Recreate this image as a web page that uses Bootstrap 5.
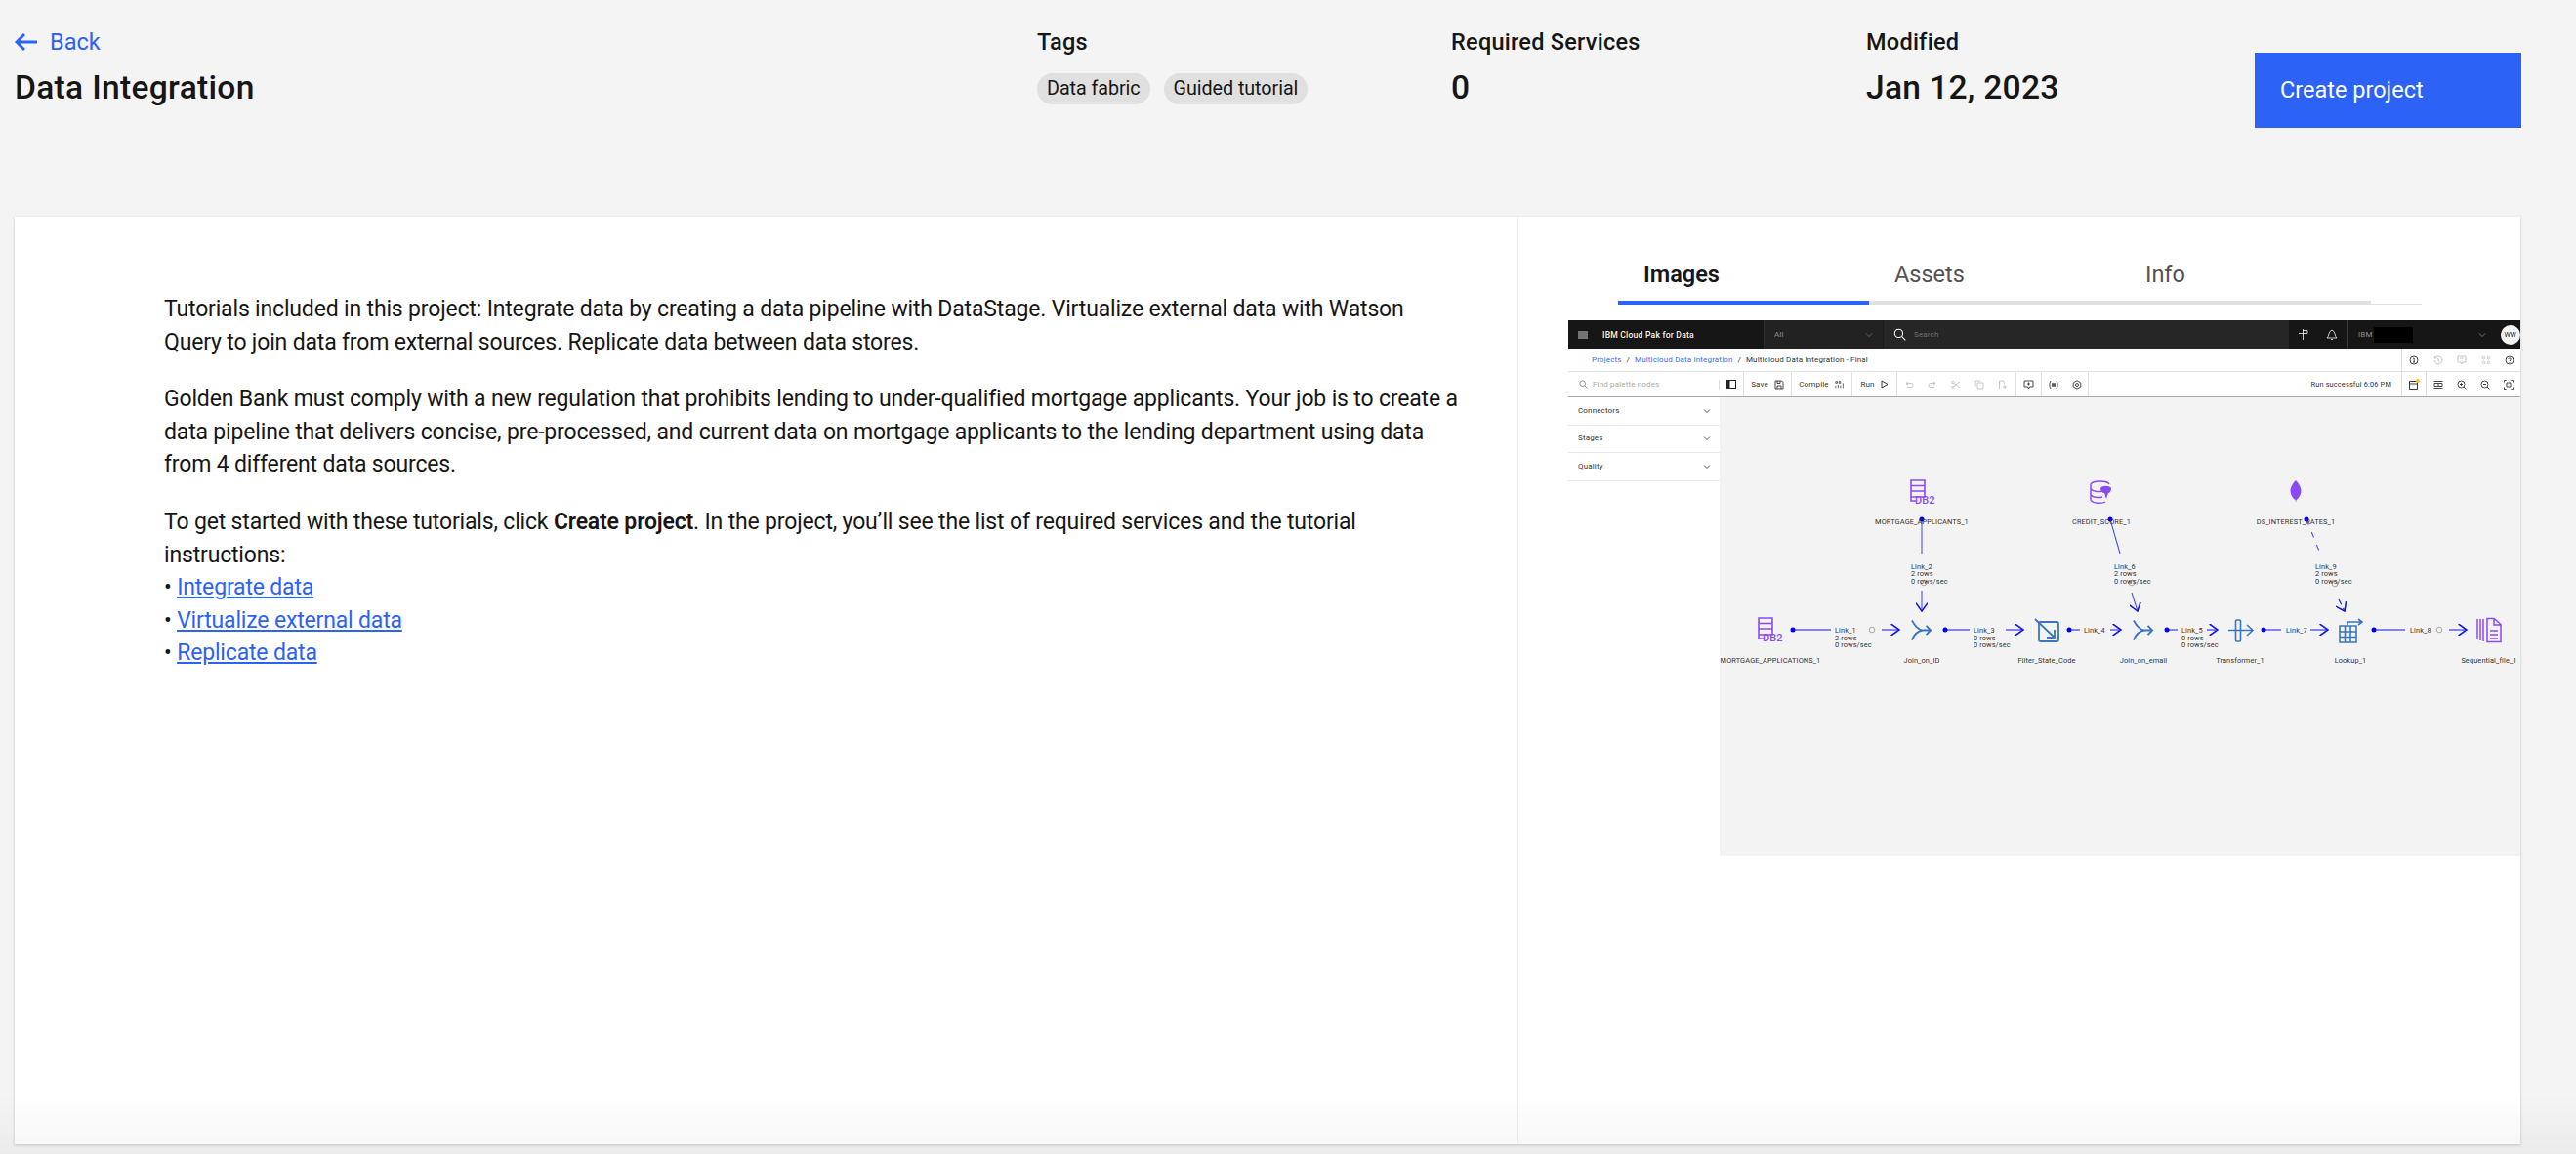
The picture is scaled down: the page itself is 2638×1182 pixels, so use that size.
<!DOCTYPE html>
<html lang="en">
  <head>
    <meta charset="UTF-8" />
    <meta name="viewport" content="width=device-width, initial-scale=1.0" />
    <title>Data Integration</title>
    <link href="https://cdn.jsdelivr.net/npm/bootstrap@5.3.3/dist/css/bootstrap.min.css" rel="stylesheet" />
    <style>
      body { background: #f4f4f4; color: #161616; font-family: Roboto, "Liberation Sans", sans-serif; font-size: 23px; line-height: 33.6px; letter-spacing: -.17px; height: 1182px; overflow: hidden; }
      a { color: #2d62f6; }
      .page-head { height: 222px; padding: 26px 56px 0 15px; }
      .head-title { width: 1047px; }
      .head-tags { width: 424px; }
      .head-req { width: 425px; }
      .head-mod { width: 398px; }
      .back-link { text-decoration: none; line-height: 34px; font-size: 23.5px; letter-spacing: 0; }
      .back-link svg { margin-right: 12px; }
      .head-label { font-size: 23.5px; font-weight: 500; line-height: 34px; letter-spacing: .25px; }
      .head-value { font-size: 33.6px; line-height: 44px; font-weight: 500; margin: 8px 0 0; letter-spacing: .3px; }
      .tag-chip { background: #e0e0e0; font-size: 19.7px; line-height: 32px; height: 32px; padding: 0 10px; letter-spacing: -.04px; }
      .head-chips { margin-top: 15px; gap: 14px; }
      .create-btn { width: 273px; height: 77px; margin-top: 28px; background: #2d62f6; border: 0; color: #fff; font-size: 23.5px; padding: 0 26px; text-align: left; letter-spacing: 0; }
      .main-card { width: 2566px; height: 950px; margin-left: 15px; box-shadow: 0 1px 3px rgba(0,0,0,.18); }
      .desc-pane { width: 1540px; padding: 78px 56px 0 153px; border-right: 1px solid #f0f0f0; }
      .desc-pane p { margin-bottom: 25px; }
      .desc-pane strong { font-weight: 600; }
      .gallery-pane { padding: 0 0 0 51px; width: 1026px; }
      .tab-strip { margin: 40px 0 0 51px; width: 823px; height: 50px; border-bottom: 1px solid #e0e0e0; }
      .tab-item { width: 257px; height: 50px; padding: 3px 26px 0; border-bottom: 4px solid #e0e0e0; color: #525252; text-decoration: none; font-size: 23.5px; letter-spacing: 0; }
      .tab-item.on { color: #161616; font-weight: 600; border-bottom-color: #2d62f6; }
      .shot { width: 975px; height: 549px; margin-top: 16px; background: #fff; font-size: 8px; line-height: 10px; letter-spacing: .15px; color: #333; overflow: hidden; }
      .shot svg { display: block; flex: none; }
      .shot-top { height: 29px; background: #262626; color: #c6c6c6; border-top-left-radius: 5px; border-top-right-radius: 5px; }
      .top-brand { width: 200px; background: #161616; color: #f4f4f4; font-size: 8.6px; font-weight: 500; padding-left: 10px; gap: 15px; letter-spacing: .2px; }
      .top-scope { width: 122px; padding: 0 10px; background: #222; border-left: 1px solid #2c2c2c; color: #8d8d8d; }
      .top-search { padding-left: 10px; gap: 8px; color: #6f6f6f; border-left: 1px solid #1c1c1c; }
      .top-tools { width: 60px; background: #161616; gap: 18px; padding-left: 9px; }
      .top-acct { width: 177px; background: #161616; border-left: 1px solid #393939; padding-left: 10px; color: #8d8d8d; }
      .acct-mask { width: 40px; height: 16px; background: #000; margin-left: 1px; }
      .acct-chev { margin-left: 67px; margin-right: 9px; }
      .acct-face { width: 20px; height: 20px; background: #f4f4f4; color: #161616; font-size: 7px; margin-left: 6px; letter-spacing: 0; }
      .shot-crumb { height: 24px; border-bottom: 1px solid #e0e0e0; padding-left: 24px; }
      .shot-crumb a { color: #3b6cf2; text-decoration: none; }
      .crumb-gap { margin: 0 5px; }
      .crumb-icons { width: 122px; height: 23px; border-left: 1px solid #e0e0e0; gap: 14.5px; padding-left: 7px; }
      .shot-bar { height: 26px; border-bottom: 1px solid #a8a8a8; }
      .bar-find { width: 155px; padding-left: 11px; gap: 5px; color: #a8a8a8; border-right: 1px solid #e0e0e0; }
      .bar-cell { height: 25px; border-right: 1px solid #e0e0e0; gap: 6px; }
      .bar-plain { gap: 14px; padding: 0 0 0 7px; width: 122px; color: #a8a8a8; }
      .bar-status { font-size: 7.4px; padding-right: 10px; }
      .bar-end { height: 25px; border-left: 1px solid #e0e0e0; }
      .icon-dim { color: #c0c0c0; }
      .shot-body { height: 470px; }
      .palette { width: 155px; }
      .palette-row { height: 28.6px; padding: 0 9px 0 10px; border-bottom: 1px solid #e8e8e8; }
      .flow { width: 820px; height: 470px; background: #f3f3f3; }
      .flow text { font-family: Roboto, "Liberation Sans", sans-serif; font-size: 7.4px; fill: #333; letter-spacing: .1px; }
      .flow .db { font-size: 11px; fill: #8a4bf5; font-weight: 500; letter-spacing: 0; }
      .stroke-icon { fill: none; stroke: currentColor; stroke-width: .9; }
      .page-fade { position: fixed; left: 0; right: 0; bottom: 0; height: 60px; background: linear-gradient(rgba(0,0,0,0), rgba(0,0,0,.035)); pointer-events: none; }
    </style>
  </head>
  <body>
    <svg width="0" height="0" class="position-absolute">
      <defs>
        <symbol id="i-chev" viewBox="0 0 8 8"><path d="M1 2.500 4 5.500 7 2.500" fill="none" stroke="currentColor" stroke-width=".8"/></symbol>
        <symbol id="i-search" viewBox="0 0 12 12"><circle cx="5" cy="5" r="3.800" fill="none" stroke="currentColor"/><path d="M8 8l3.400 3.400" stroke="currentColor"/></symbol>
        <symbol id="i-save" viewBox="0 0 10 10"><path class="stroke-icon" d="M1 1h6.500L9 2.500V9H1zM3 1v2.500h3V1M3 9V6h4v3"/></symbol>
        <symbol id="i-compile" viewBox="0 0 12 10"><path class="stroke-icon" d="M1 1h2v2H1zM5 1h2v2H5zM1 6v3M4 5v4M7 6v3M10 3v6"/></symbol>
        <symbol id="i-undo" viewBox="0 0 10 10"><path class="stroke-icon" d="M2 3.500h5a2 2 0 0 1 0 4H3M2 3.500l2-1.500M2 3.500l2 1.500"/></symbol>
        <symbol id="i-redo" viewBox="0 0 10 10"><path class="stroke-icon" d="M8 3.500H3a2 2 0 0 0 0 4h4M8 3.500 6 2M8 3.500 6 5"/></symbol>
        <symbol id="i-cut" viewBox="0 0 10 10"><path class="stroke-icon" d="M3 3.500 9 8M3 6.500 9 2"/><circle class="stroke-icon" cx="2" cy="2.500" r="1.200"/><circle class="stroke-icon" cx="2" cy="7.500" r="1.200"/></symbol>
        <symbol id="i-copy" viewBox="0 0 10 10"><path class="stroke-icon" d="M3 3h6v6H3zM1 6.500V1h5.500"/></symbol>
        <symbol id="i-paste" viewBox="0 0 10 10"><path class="stroke-icon" d="M1.500 9V1h3.500l1.500 1.500V4M5 7h4M7 5v4"/></symbol>
        <symbol id="i-note" viewBox="0 0 11 10"><path class="stroke-icon" d="M1 1h9v6H6.500L5.500 9l-1-2H1zM5.500 2.500v3M4 4h3"/></symbol>
        <symbol id="i-gear" viewBox="0 0 10 10"><path class="stroke-icon" d="M5 .8 8.800 3v4L5 9.200 1.200 7V3z"/><circle class="stroke-icon" cx="5" cy="5" r="1.500"/></symbol>
        <symbol id="i-hash" viewBox="0 0 10 10"><path class="stroke-icon" d="M2 1C.5 3 .5 7 2 9M8 1c1.500 2 1.500 6 0 8M4 3v4M6 3v4M3 4.200h4M3 5.800h4"/></symbol>
        <symbol id="i-info" viewBox="0 0 10 10"><circle class="stroke-icon" cx="5" cy="5" r="4"/><path class="stroke-icon" d="M4 3h1.200v4M4 7h2.200"/></symbol>
        <symbol id="i-help" viewBox="0 0 10 10"><circle class="stroke-icon" cx="5" cy="5" r="4"/><path class="stroke-icon" d="M3.700 3.800C4 2.500 6.300 2.500 6.300 4 6.300 5 5 5 5 6M5 7v.8"/></symbol>
        <symbol id="i-clock" viewBox="0 0 10 10"><path class="stroke-icon" d="M1.500 3A4 4 0 1 1 1 5M1.500 1v2h2M5 3v2.500l1.500 1"/></symbol>
        <symbol id="i-chat" viewBox="0 0 10 10"><path class="stroke-icon" d="M1 1h8v6H6L5 9 4 7H1zM3 3h4"/></symbol>
        <symbol id="i-dots" viewBox="0 0 10 10"><circle class="stroke-icon" cx="2.500" cy="2.500" r="1.300"/><circle class="stroke-icon" cx="7.500" cy="2.500" r="1.300"/><circle class="stroke-icon" cx="2.500" cy="7.500" r="1.300"/><circle class="stroke-icon" cx="7.500" cy="7.500" r="1.300"/></symbol>
        <symbol id="i-rows" viewBox="0 0 10 10"><path class="stroke-icon" d="M.5 1.500h9M.5 8.500h9M1 3.500h8v3H1zM5 3.500v3"/></symbol>
        <symbol id="i-zoomin" viewBox="0 0 10 10"><circle class="stroke-icon" cx="4.500" cy="4.500" r="3.500"/><path class="stroke-icon" d="M7 7l2.500 2.500M4.500 3v3M3 4.500h3"/></symbol>
        <symbol id="i-zoomout" viewBox="0 0 10 10"><circle class="stroke-icon" cx="4.500" cy="4.500" r="3.500"/><path class="stroke-icon" d="M7 7l2.500 2.500M3 4.500h3"/></symbol>
        <symbol id="i-fit" viewBox="0 0 10 10"><path class="stroke-icon" d="M.5 2.500V.5h2M7.500.5h2v2M9.500 7.500v2h-2M2.500 9.500h-2v-2M3 3h4v4H3z"/></symbol>
        <symbol id="i-db2" viewBox="0 0 26 25"><path d="M1 1h14v17H1zM1 6.500h14M1 12h14M1 18v4h5" fill="none" stroke="#8a4bf5" stroke-width="1.600"/></symbol>
        <symbol id="i-join" viewBox="0 0 24 24"><path d="M1 1c3 5 6 10 12 11h9M1 23c2-5 6-10 12-11M17 7l5 5-5 5" fill="none" stroke="#3a76bf" stroke-width="2"/></symbol>
        <marker id="m-arrow" viewBox="0 0 10 10" refX="9" refY="5" markerWidth="12" markerHeight="12" markerUnits="userSpaceOnUse" orient="auto"><path d="M2 0 9 5 2 10" fill="none" stroke="#1515e8" stroke-width="1.300"/></marker>
      </defs>
    </svg>

    <div class="page-head d-flex align-items-start">
      <div class="head-title">
        <a href="#" class="back-link d-flex align-items-center">
          <svg width="24" height="20" viewBox="0 0 24 20"><path d="M23 10H3M10 2 2 10l8 8" fill="none" stroke="#2d62f6" stroke-width="3"/></svg>Back
        </a>
        <h1 class="head-value">Data Integration</h1>
      </div>
      <div class="head-tags">
        <div class="head-label">Tags</div>
        <div class="head-chips d-flex">
          <span class="tag-chip rounded-pill">Data fabric</span>
          <span class="tag-chip rounded-pill">Guided tutorial</span>
        </div>
      </div>
      <div class="head-req">
        <div class="head-label">Required Services</div>
        <div class="head-value">0</div>
      </div>
      <div class="head-mod">
        <div class="head-label">Modified</div>
        <div class="head-value">Jan 12, 2023</div>
      </div>
      <button type="button" class="btn rounded-0 create-btn">Create project</button>
    </div>

    <div class="card main-card rounded-0 border-0 flex-row">
      <div class="desc-pane">
        <p>Tutorials included in this project: Integrate data by creating a data pipeline with DataStage. Virtualize external data with Watson Query to join data from external sources. Replicate data between data stores.</p>
        <p>Golden Bank must comply with a new regulation that prohibits lending to under-qualified mortgage applicants. Your job is to create a data pipeline that delivers concise, pre-processed, and current data on mortgage applicants to the lending department using data from 4 different data sources.</p>
        <p>To get started with these tutorials, click <strong>Create project</strong>. In the project, you’ll see the list of required services and the tutorial instructions:<br />
          • <a href="#">Integrate data</a><br />
          • <a href="#">Virtualize external data</a><br />
          • <a href="#">Replicate data</a></p>
      </div>

      <div class="gallery-pane">
        <div class="tab-strip d-flex">
          <a href="#" class="tab-item on">Images</a>
          <a href="#" class="tab-item">Assets</a>
          <a href="#" class="tab-item">Info</a>
        </div>

        <div class="shot">
          <div class="shot-top d-flex align-items-stretch">
            <div class="top-brand d-flex align-items-center">
              <svg width="10" height="8" viewBox="0 0 10 8"><path d="M0 1h10M0 3h10M0 5h10M0 7h10" stroke="#d0d0d0"/></svg>IBM Cloud Pak for Data
            </div>
            <div class="top-scope d-flex align-items-center justify-content-between">All
              <svg width="8" height="8" class="text-secondary"><use href="#i-chev"/></svg>
            </div>
            <div class="top-search d-flex align-items-center flex-grow-1">
              <svg width="13" height="13" class="text-light"><use href="#i-search"/></svg>Search
            </div>
            <div class="top-tools d-flex align-items-center text-light">
              <svg width="11" height="13" viewBox="0 0 11 13"><path d="M5.500 1v11M1 5.500h9V2.500H5" fill="none" stroke="currentColor" stroke-width=".8"/></svg>
              <svg width="12" height="13" viewBox="0 0 12 13"><path d="M1 10c2-1 1.500-7 5-8 3.500 1 3 7 5 8zM5 11.500h2" fill="none" stroke="currentColor" stroke-width=".8"/></svg>
            </div>
            <div class="top-acct d-flex align-items-center">IBM
              <span class="acct-mask"></span>
              <svg width="8" height="8" class="acct-chev"><use href="#i-chev"/></svg>
              <span class="acct-face rounded-circle d-flex align-items-center justify-content-center">WW</span>
            </div>
          </div>

          <div class="shot-crumb d-flex align-items-center justify-content-between">
            <div><a href="#">Projects</a><span class="crumb-gap">/</span><a href="#">Multicloud Data Integration</a><span class="crumb-gap">/</span>Multicloud Data Integration - Final</div>
            <div class="crumb-icons d-flex align-items-center">
              <svg width="10" height="10"><use href="#i-info"/></svg>
              <svg width="10" height="10" class="icon-dim"><use href="#i-clock"/></svg>
              <svg width="10" height="10" class="icon-dim"><use href="#i-chat"/></svg>
              <svg width="10" height="10" class="icon-dim"><use href="#i-dots"/></svg>
              <svg width="10" height="10"><use href="#i-help"/></svg>
            </div>
          </div>

          <div class="shot-bar d-flex align-items-center">
            <div class="bar-find d-flex align-items-center">
              <svg width="9" height="9" class="text-secondary"><use href="#i-search"/></svg>Find palette nodes
            </div>
            <div class="bar-cell d-flex align-items-center justify-content-center" style="width:25px"><svg width="10" height="9" viewBox="0 0 10 9"><rect x=".5" y=".5" width="9" height="8" fill="#fff" stroke="#222"/><rect x=".5" y=".5" width="3" height="8" fill="#222"/></svg></div>
            <div class="bar-cell d-flex align-items-center justify-content-center" style="width:49px">Save <svg width="10" height="10"><use href="#i-save"/></svg></div>
            <div class="bar-cell d-flex align-items-center justify-content-center" style="width:62px">Compile <svg width="10" height="10"><use href="#i-compile"/></svg></div>
            <div class="bar-cell d-flex align-items-center justify-content-center" style="width:46px">Run <svg width="8" height="9" viewBox="0 0 8 9"><path d="M1 1l6 3.500-6 3.500z" fill="none" stroke="#222" stroke-width=".9"/></svg></div>
            <div class="bar-plain bar-cell d-flex align-items-center">
              <svg width="10" height="10" class="icon-dim"><use href="#i-undo"/></svg><svg width="10" height="10" class="icon-dim"><use href="#i-redo"/></svg><svg width="10" height="10" class="icon-dim"><use href="#i-cut"/></svg><svg width="10" height="10" class="icon-dim"><use href="#i-copy"/></svg><svg width="10" height="10" class="icon-dim"><use href="#i-paste"/></svg>
            </div>
            <div class="bar-cell d-flex align-items-center justify-content-center" style="width:26px"><svg width="11" height="10"><use href="#i-note"/></svg></div>
            <div class="bar-cell d-flex align-items-center justify-content-center" style="width:48px;gap:14px"><svg width="10" height="10"><use href="#i-hash"/></svg><svg width="10" height="10"><use href="#i-gear"/></svg></div>
            <div class="bar-status flex-grow-1 text-end">Run successful 6:06 PM</div>
            <div class="bar-end d-flex align-items-center justify-content-center" style="width:25px"><svg width="12" height="12" viewBox="0 0 12 12"><path d="M1.500 2.500h8v8h-8zM1.500 5h8" fill="none" stroke="#222" stroke-width=".9"/><circle cx="10" cy="2" r="2" fill="#f1c21b"/></svg></div>
            <div class="bar-end d-flex align-items-center" style="width:97px;gap:14px;padding-left:7px">
              <svg width="10" height="10"><use href="#i-rows"/></svg><svg width="10" height="10"><use href="#i-zoomin"/></svg><svg width="10" height="10"><use href="#i-zoomout"/></svg><svg width="10" height="10"><use href="#i-fit"/></svg>
            </div>
          </div>

          <div class="shot-body d-flex">
            <div class="palette">
              <div class="palette-row d-flex align-items-center justify-content-between">Connectors<svg width="8" height="8"><use href="#i-chev"/></svg></div>
              <div class="palette-row d-flex align-items-center justify-content-between">Stages<svg width="8" height="8"><use href="#i-chev"/></svg></div>
              <div class="palette-row d-flex align-items-center justify-content-between">Quality<svg width="8" height="8"><use href="#i-chev"/></svg></div>
            </div>
            <svg class="flow" viewBox="1761 407 820 470">
              <!-- links -->
              <g fill="none" stroke="#1515e8" stroke-width="1.100">
                <path d="M1836 645h39M1927 645h18" marker-end="url(#m-arrow)"/>
                <path d="M1992 645h25M2054 645h18" marker-end="url(#m-arrow)"/>
                <path d="M2119 645h11M2161 645h11" marker-end="url(#m-arrow)"/>
                <path d="M2219 645h11M2260 645h11" marker-end="url(#m-arrow)"/>
                <path d="M2318 645h18M2366 645h18" marker-end="url(#m-arrow)"/>
                <path d="M2431 645h32M2508 645h18" marker-end="url(#m-arrow)"/>
                <path d="M1968 532v35M1968 605v21" marker-end="url(#m-arrow)" stroke="#5050ee"/>
                <path d="M2161 532l10 35M2183 607l6 19" marker-end="url(#m-arrow)" stroke="#5050ee"/>
                <path d="M2362 532l14 35" stroke="#5050ee" stroke-dasharray="6 8"/>
                <path d="M2395 614l6 12" marker-end="url(#m-arrow)" stroke-dasharray="6 4"/>
              </g>
              <g fill="#0000f0">
                <circle cx="1836" cy="645" r="2.500"/><circle cx="1992" cy="645" r="2.500"/><circle cx="2119" cy="645" r="2.500"/>
                <circle cx="2219" cy="645" r="2.500"/><circle cx="2318" cy="645" r="2.500"/><circle cx="2431" cy="645" r="2.500"/>
                <circle cx="1968" cy="532" r="2.500"/><circle cx="2161" cy="532" r="2.500"/><circle cx="2362" cy="532" r="2.500"/>
              </g>
              <g fill="none" stroke="#a8a8a8">
                <circle cx="1917" cy="645" r="2.800"/><circle cx="2498" cy="645" r="2.800"/><circle cx="1970" cy="597" r="2.800"/><circle cx="2183" cy="597" r="2.800"/><circle cx="2391" cy="598" r="2.800"/>
              </g>

              <!-- nodes -->
              <use href="#i-db2" x="1956" y="491" width="26" height="25"/><text class="db" x="1961" y="516">DB2</text>
              <use href="#i-db2" x="1800" y="632" width="26" height="25"/><text class="db" x="1805" y="657">DB2</text>
              <g transform="translate(2140 492)">
                <path d="M20 4C18 0 3 0 1 4v16c2 4 12 4 15 2M1 9c3 3 9 3 12 2M1 15c3 3 9 3 12 2" fill="none" stroke="#8a4bf5" stroke-width="1.500"/>
                <path d="M11 8c2-3 9-3 11 0 0 4-2 5-3 5l-2 6-2-6c-2 0-4-2-4-5z" fill="#8a4bf5"/>
              </g>
              <path d="M2351 492c4 4 5.500 8 5.500 11s-2 7-5 9l-.5 3-.5-3c-3-2-5-6-5-9s1.500-7 5.500-11z" fill="#8a4bf5"/>
              <use href="#i-join" x="1957" y="634" width="22" height="23"/>
              <use href="#i-join" x="2184" y="634" width="22" height="23"/>
              <g fill="none" stroke="#3a76bf">
                <rect x="2088" y="637" width="20" height="20" rx="1.500" stroke-width="1.800"/>
                <path d="M2084 634l20 19M2104 645v8h-8" stroke-width="1.800"/>
                <rect x="2289.500" y="635" width="5" height="22" rx="1" stroke-width="1.600"/>
                <path d="M2282 645.500h24M2301 640l6 5.500-6 5.500" stroke-width="1.600"/>
                <path d="M2396 641h17v17h-17zM2396 647h17M2396 652.500h17M2401.500 641v17M2407 641v17" stroke-width="1.600"/>
                <path d="M2404 640v-3h14M2415 634l4 3-4 3" stroke-width="1.600"/>
              </g>
              <g fill="none" stroke="#8a4bf5" stroke-width="1.500">
                <path d="M2537 634v21M2540 634v22M2543 634v23"/>
                <path d="M2547 633.500h7l7 6v18h-14zM2554 634v6h7M2550 646h8M2550 650h8M2550 654h8"/>
              </g>

              <!-- labels -->
              <g text-anchor="middle">
                <text x="1968" y="537">MORTGAGE_APPLICANTS_1</text>
                <text x="2152" y="537">CREDIT_SCORE_1</text>
                <text x="2351" y="537">DS_INTEREST_RATES_1</text>
                <text x="1813" y="679">MORTGAGE_APPLICATIONS_1</text>
                <text x="1968" y="679">Join_on_ID</text>
                <text x="2096" y="679">Filter_State_Code</text>
                <text x="2195" y="679">Join_on_email</text>
                <text x="2294" y="679">Transformer_1</text>
                <text x="2407" y="679">Lookup_1</text>
                <text x="2549" y="679">Sequential_file_1</text>
              </g>
              <text x="1957" y="583">Link_2</text><text x="1957" y="590">2 rows</text><text x="1957" y="597.500">0 rows/sec</text>
              <text x="2165" y="583">Link_6</text><text x="2165" y="590">2 rows</text><text x="2165" y="597.500">0 rows/sec</text>
              <text x="2371" y="583">Link_9</text><text x="2371" y="590">2 rows</text><text x="2371" y="597.500">0 rows/sec</text>
              <text x="1879" y="648">Link_1</text><text x="1879" y="656">2 rows</text><text x="1879" y="663">0 rows/sec</text>
              <text x="2021" y="648">Link_3</text><text x="2021" y="656">0 rows</text><text x="2021" y="663">0 rows/sec</text>
              <text x="2134" y="648">Link_4</text>
              <text x="2234" y="648">Link_5</text><text x="2234" y="656">0 rows</text><text x="2234" y="663">0 rows/sec</text>
              <text x="2341" y="648">Link_7</text>
              <text x="2468" y="648">Link_8</text>
            </svg>
          </div>
        </div>
      </div>
    </div>

    <div class="page-fade"></div>
  </body>
</html>
